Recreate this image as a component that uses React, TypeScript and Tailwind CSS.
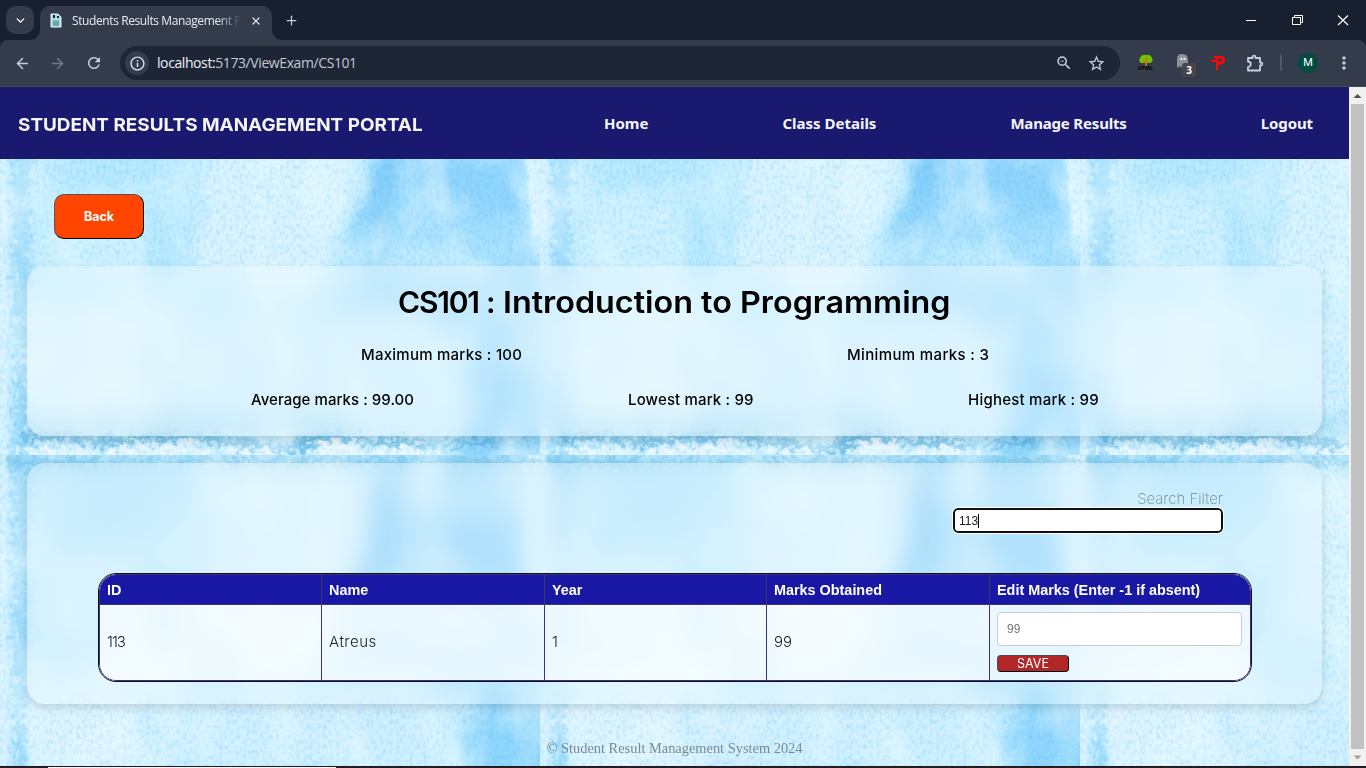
import React from "react";
import { ArrowLeft, ArrowRight, ChevronDown, Plus, X } from "lucide-react";
import { MdInfoOutline, MdMoreVert, MdRefresh, MdStarBorder, MdZoomOut } from "react-icons/md";

/* ---------- watercolour backdrop ---------- */

function Tile({ x, y }: { x: number; y: number }) {
  return (
    <svg x={x} y={y} width="540" height="360" viewBox="0 0 540 360" overflow="hidden">
      <rect width="540" height="360" fill="#c6efff" />
      <g filter="url(#soft)">
        <rect x="60" y="-10" width="130" height="190" fill="#b9eaff" />
        <ellipse cx="90" cy="140" rx="50" ry="45" fill="#cff2ff" />
        <path d="M210 -10H370L350 120L310 200L200 190Z" fill="#dbf5ff" />
        <ellipse cx="120" cy="270" rx="110" ry="55" fill="#e0f6ff" />
        <ellipse cx="270" cy="270" rx="140" ry="50" fill="#d3f2ff" />
        <path d="M396 -20H532V110L538 190L542 230H470L335 215L356 150L376 100L392 50Z" fill="#a4dffe" />
        <ellipse cx="455" cy="40" rx="45" ry="16" fill="#b2e5ff" />
        <ellipse cx="470" cy="90" rx="60" ry="24" fill="#90d5fd" />
        <ellipse cx="440" cy="165" rx="50" ry="24" fill="#bfecff" />
        <path d="M388 0L408 30L404 70L386 120L364 160L374 80Z" fill="#7fccf9" />
        <ellipse cx="400" cy="275" rx="50" ry="60" fill="#d0f1ff" />
        <path d="M496 190H556V380H456L470 270Z" fill="#91d7fd" />
        <ellipse cx="200" cy="330" rx="180" ry="10" fill="#aee1f8" />
        <path d="M-20 -10H560V14H-20Z" fill="#9fdaf5" opacity=".7" />
      </g>
      <path d="M523 -5H545V140H533L528 90Z" fill="#dcf5ff" filter="url(#edge)" />
      <g filter="url(#ragged)">
        <path d="M14 -10H34L36 60L28 110L32 200L24 260L30 370H12L16 240L12 120Z" fill="#7fcdf7" opacity=".5" />
        <path d="M0 4H540V11H420L400 15L385 9L300 12L180 8L60 13L0 13Z" fill="#6cbee6" opacity=".5" />
        <path d="M20 341L60 337L110 344L160 337L210 339L250 345L285 352L310 340L345 336L370 345L400 342L440 350L470 344L535 347V351H450L400 350L372 351L345 342L320 351L285 359L250 355L200 345L150 344L110 351L60 343L20 349Z" fill="#4aa8d8" opacity=".6" />
      </g>
      <g filter="url(#ragged)" fill="#effaff" opacity=".9">
        <ellipse cx="60" cy="362" rx="42" ry="11" />
        <ellipse cx="160" cy="362" rx="60" ry="13" />
        <ellipse cx="250" cy="364" rx="35" ry="9" />
        <ellipse cx="335" cy="358" rx="26" ry="14" />
        <ellipse cx="405" cy="362" rx="38" ry="11" />
      </g>
      <rect x="0" y="0" width="7" height="360" fill="#dff5ff" opacity=".85" filter="url(#edge)" />
      <rect width="540" height="360" filter="url(#grainDark)" />
      <rect width="540" height="360" filter="url(#grainLight)" />
    </svg>
  );
}

function Watercolour() {
  return (
    <svg className="absolute inset-0" width="1349" height="607" aria-hidden="true">
      <defs>
        <filter id="soft" x="-10%" y="-10%" width="120%" height="120%" colorInterpolationFilters="sRGB">
          <feGaussianBlur stdDeviation="9" result="b" />
          <feTurbulence type="fractalNoise" baseFrequency="0.03" numOctaves="4" seed="4" result="n" />
          <feDisplacementMap in="b" in2="n" scale="36" xChannelSelector="R" yChannelSelector="G" />
        </filter>
        <filter id="edge" x="-20%" y="-5%" width="140%" height="110%" colorInterpolationFilters="sRGB">
          <feGaussianBlur stdDeviation="1.2" result="b" />
          <feTurbulence type="fractalNoise" baseFrequency="0.09" numOctaves="3" seed="8" result="n" />
          <feDisplacementMap in="b" in2="n" scale="5" xChannelSelector="R" yChannelSelector="G" />
        </filter>
        <filter id="ragged" x="-5%" y="-20%" width="110%" height="140%" colorInterpolationFilters="sRGB">
          <feGaussianBlur stdDeviation="2.2" result="b" />
          <feTurbulence type="fractalNoise" baseFrequency="0.14" numOctaves="4" seed="2" result="n" />
          <feDisplacementMap in="b" in2="n" scale="26" xChannelSelector="R" yChannelSelector="G" />
        </filter>
        <filter id="grainDark" x="0" y="0" width="100%" height="100%" colorInterpolationFilters="sRGB">
          <feTurbulence type="fractalNoise" baseFrequency="0.3 0.2" numOctaves="4" seed="11" />
          <feColorMatrix values="0 0 0 0 .32  0 0 0 0 .72  0 0 0 0 .95  .55 0 0 0 -.22" />
        </filter>
        <filter id="grainLight" x="0" y="0" width="100%" height="100%" colorInterpolationFilters="sRGB">
          <feTurbulence type="fractalNoise" baseFrequency="0.02 0.012" numOctaves="6" seed="23" />
          <feColorMatrix values="0 0 0 0 .92  0 0 0 0 .985  0 0 0 0 1  1.5 0 0 0 -.67" />
        </filter>
      </defs>
      {[-64, 296].map((y) => [0, 540, 1080].map((x) => <Tile key={`${x}-${y}`} x={x} y={y} />))}
    </svg>
  );
}

/* ---------- browser chrome ---------- */

function TabStrip() {
  return (
    <div className="flex h-10 bg-[#18202f]">
      <div className="flex w-10 shrink-0 items-start pt-[6px] pl-[6px]">
        <div className="flex size-7 items-center justify-center rounded-[10px] bg-[#343c4c] text-white">
          <ChevronDown size={13} strokeWidth={2.6} />
        </div>
      </div>
      <div className="relative mt-[6px] flex h-[34px] w-[232px] items-center rounded-t-[10px] bg-[#343c4c] pr-[8px] pb-[5px] pl-[10px]">
        <svg className="absolute bottom-0 -left-[10px]" width="10" height="10"><path d="M10 0V10H0A10 10 0 0 0 10 0Z" fill="#343c4c" /></svg>
        <svg className="absolute -right-[10px] bottom-0" width="10" height="10"><path d="M0 0V10H10A10 10 0 0 1 0 0Z" fill="#343c4c" /></svg>
        <svg width="12" height="15" viewBox="0 0 12 15" className="shrink-0">
          <path d="M1 1H8L11 4V14H1Z" fill="#a9dbe0" stroke="#e4f4f4" />
          <path d="M3 2H5V5H3ZM7 3H9V5H7Z" fill="#1d2b38" />
          <path d="M3 7.5H9V13H3Z" fill="#6fa3ad" />
        </svg>
        <div className="ml-[10px] h-[18px] w-[168px] font-['Open_Sans'] text-[12px] leading-[18px] tracking-[-0.4px] whitespace-nowrap text-[#e8eaf0] [mask-image:linear-gradient(to_right,#000_145px,transparent_169px)]">
          Students Results Management P
        </div>
        <X size={12} strokeWidth={2.4} className="ml-[10px] shrink-0 text-[#e8eaf0]" />
      </div>
      <Plus size={15} strokeWidth={2} className="mt-[13px] ml-[12px] text-[#c7cddd]" />
      <div className="ml-auto flex h-10 items-center text-white">
        <svg width="138" height="40" fill="none" stroke="#fff" strokeWidth="1">
          <path d="M18 20.5H28" />
          <path d="M64.500 17.500H72.500V24.500H64.500ZM66.500 17.500V15.500H74.500V22.500H72.500" />
          <path d="M110 15.500L120 25M120 15.500L110 25" strokeWidth="1.200" />
        </svg>
      </div>
    </div>
  );
}

function Toolbar() {
  return (
    <div className="flex bg-[#18202f]">
      <div className="flex h-[47px] w-full items-center rounded-t-[8px] border-b border-[#484a4d] bg-[#343c4c] font-['Open_Sans'] text-[#c7cddd]">
        <ArrowLeft size={17} strokeWidth={2.1} className="ml-[14px]" />
        <ArrowRight size={17} strokeWidth={2.1} className="ml-[18px] text-[#737b8b]" />
        <MdRefresh size={18} className="ml-[19px]" />
        <div className="ml-[17px] flex h-[34px] w-[1000px] items-center rounded-full bg-[#1e2636] pl-[5px]">
          <div className="flex size-6 items-center justify-center rounded-full bg-[#343c4c]">
            <MdInfoOutline size={17} className="text-[#dfe2ea]" />
          </div>
          <div className="ml-[8px] text-[14px] leading-[20px] tracking-[-0.41px] text-[#c3c8d2]">
            <span className="text-[#eef0f5]">localhost:</span>5173/ViewExam/CS101
          </div>
          <MdZoomOut size={18} className="ml-auto" />
          <MdStarBorder size={19} className="mr-[14px] ml-[14px]" />
        </div>
        <div className="relative ml-[18px] h-[18px] w-4">
          <svg width="16" height="18" viewBox="0 0 16 18">
            <path d="M3 9Q0 7 2 4Q4 0 8 1Q12 0 14 4Q16 7 12 9Z" fill="#6ac800" />
            <path d="M8 3V13M8 9L11 6M8 9L5 7" stroke="#c47a12" strokeWidth="1.600" />
          </svg>
          <span className="absolute top-[12px] left-0 font-['Liberation_Sans'] text-[5.500px] leading-[5px] font-bold text-black">HTML</span>
        </div>
        <div className="relative ml-[21px] h-[22px] w-[22px]">
          <svg width="16" height="18" viewBox="0 0 16 18">
            <path d="M2 16V7Q2 2 7 2Q13 2 13 8V13L8 12L7 16L5 14Z" fill="#8e9197" />
            <circle cx="6.500" cy="7" r="1.100" fill="#fff" /><circle cx="9.500" cy="7" r="1.100" fill="#fff" />
          </svg>
          <span className="absolute top-[11px] left-[7px] flex h-[14px] w-[14px] items-center justify-center rounded-[3px] bg-[#44464a] text-[10px] font-bold text-white">3</span>
        </div>
        <svg className="ml-[13px]" width="16" height="17" viewBox="0 0 16 17">
          <path d="M3 1H11Q15 1 15 5Q15 10 8 10V14L6 16V7H11Q12 7 12 5.500Q12 4 10 4H5ZM0 5H9V7H2Z" fill="#f80808" />
        </svg>
        <svg className="ml-[20px]" width="18" height="19" viewBox="0 0 18 19" fill="none" stroke="#c7cddd" strokeWidth="1.800">
          <path d="M2 4H6.500V3.200A1.500 1.500 0 0 1 9.500 3.200V4H14V8.500H14.800A1.500 1.500 0 0 1 14.800 11.500H14V16.500H2V13A2.500 2.500 0 0 0 2 7.500Z" strokeLinejoin="round" />
        </svg>
        <div className="ml-[16px] h-4 w-[2px] bg-[#505869]" />
        <div className="ml-[16px] flex size-[20px] items-center justify-center rounded-full bg-[#004d40] font-[Roboto] text-[11px] text-white">M</div>
        <MdMoreVert size={20} className="ml-[16px]" />
      </div>
    </div>
  );
}

function Scrollbar() {
  return (
    <div className="flex w-[17px] flex-col items-center bg-[#f1f1f1]">
      <svg width="17" height="17"><path d="M4.500 11H12.500L8.500 7Z" fill="#505050" /></svg>
      <div className="h-[645px] w-[13px] bg-[#c1c1c1]" />
      <svg width="17" height="17"><path d="M4.500 6.500H12.500L8.500 10.500Z" fill="#a3a3a3" /></svg>
    </div>
  );
}

/* ---------- page ---------- */

function NavBar() {
  return (
    <header className="flex h-[72px] items-center bg-[#191970] pl-[18px] text-[#f5f5f5]">
      <div className="w-[586px] pt-[3px] font-[Inter] text-[18px] leading-[24px] font-bold whitespace-nowrap">
        <span className="inline-block origin-left scale-x-[1.05]">STUDENT RESULTS MANAGEMENT PORTAL</span>
      </div>
      <nav className="flex w-[709px] justify-between pb-px font-['Noto_Sans'] text-[15px] leading-[20px] font-bold whitespace-nowrap">
        <span>Home</span>
        <span>Class Details</span>
        <span className="tracking-[-0.18px]">Manage Results</span>
        <span className="tracking-[-0.1px]">Logout</span>
      </nav>
    </header>
  );
}

function Card({ className, children }: { className: string; children: React.ReactNode }) {
  return (
    <section className={`relative mx-[27px] w-[1295px] rounded-[18px] shadow-[0_4px_10px_rgba(0,0,0,0.13)] backdrop-blur-[10px] ${className}`}>
      {children}
    </section>
  );
}

function Summary() {
  return (
    <Card className="mt-[27px] h-[170px] bg-[#f8fcff]/38 font-[Inter] text-black">
      <h1 className="flex pt-[18px] pl-[371px] text-[30px] leading-[36px] font-semibold whitespace-nowrap">
        <span className="w-[88px] tracking-[-1.2px]">CS101</span>
        <span className="w-[17px]">:</span>
        <span className="origin-left scale-x-[1.077]">Introduction to Programming</span>
      </h1>
      <div className="mt-[25px] flex pl-[334px] text-[15px] leading-[20px] font-medium whitespace-nowrap">
        <p className="w-[486px] tracking-[0.25px]">Maximum marks : 100</p>
        <p className="tracking-[0.36px]">Minimum marks : 3</p>
      </div>
      <div className="mt-[25px] flex pl-[224px] text-[15px] leading-[20px] font-medium whitespace-nowrap">
        <p className="w-[377px] tracking-[0.05px]">Average marks : 99.00</p>
        <p className="w-[340px] tracking-[0.15px]">Lowest mark : 99</p>
        <p className="tracking-[0.23px]">Highest mark : 99</p>
      </div>
    </Card>
  );
}

function ResultsTable() {
  const columns = ["ID", "Name", "Year", "Marks Obtained", "Edit Marks (Enter -1 if absent)"];
  return (
    <div className="ml-[71px] h-[109px] w-[1154px] overflow-hidden rounded-[18px] border border-[#10101c]">
      <div className="h-[107px] overflow-hidden rounded-[17px] border border-[#3c3278]">
        <div className="grid h-[30px] grid-cols-[222px_223px_222px_223px_260px] border-b border-[#3f3569] bg-[#1818a5] font-['Liberation_Sans'] text-[14.4px] leading-[31px] font-bold text-white">
          {columns.map((c) => (
            <div key={c} className="h-[29px] border-r border-[#3f3569] pl-[7px] whitespace-nowrap last:border-r-0">{c}</div>
          ))}
        </div>
        <div className="grid h-[75px] grid-cols-[222px_223px_222px_223px_260px] bg-white/60 font-[Inter] text-[15px] leading-[74px] font-light text-[#202226]">
          <div className="border-r border-[#3c3278] pl-[7px] tracking-[-1px]">113</div>
          <div className="border-r border-[#3c3278] pl-[7px] tracking-[0.5px]">Atreus</div>
          <div className="border-r border-[#3c3278] pl-[7px]">1</div>
          <div className="border-r border-[#3c3278] pl-[7px]">99</div>
          <div className="flex flex-col items-start pt-[7px] pl-[7px]">
            <div className="h-[34px] w-[245px] rounded-[4px] border border-[#cccccc] bg-white pl-[9px] font-['Liberation_Sans'] text-[12px] leading-[32px] font-normal text-[#757575]">99</div>
            <button className="mt-[9px] h-[17px] w-[72px] rounded-[4px] border border-t-[#4a4a4a] border-r-black border-b-black border-l-[#4a4a4a] bg-[#b22828] text-center font-[Inter] text-[12.500px] leading-[15px] font-normal text-white">SAVE</button>
          </div>
        </div>
      </div>
    </div>
  );
}

function Results() {
  return (
    <Card className="mt-[27px] h-[241px] bg-[#f8fcff]/32">
      <div className="flex flex-col items-end pt-[27px] pr-[99px]">
        <label className="font-[Inter] text-[15px] leading-[18px] font-extralight text-[#78878f]">Search Filter</label>
        <div className="flex h-[25px] w-[270px] items-center rounded-[5px] border-2 border-[#101010] bg-white pl-[4px] font-['Liberation_Sans'] text-[12px] text-[#202020] outline outline-white">
          113<span className="h-[14px] w-px bg-black" />
        </div>
      </div>
      <div className="mt-[40px]"><ResultsTable /></div>
    </Card>
  );
}

export default function App() {
  return (
    <div className="flex h-[768px] w-[1366px] flex-col overflow-hidden bg-[#18202f]">
      <TabStrip />
      <Toolbar />
      <div className="flex h-[679px]">
        <div className="flex w-[1349px] flex-col">
          <NavBar />
          <main className="relative h-[607px] overflow-hidden">
            <Watercolour />
            <button className="relative mt-[35px] ml-[54px] block h-[45px] w-[90px] rounded-[10px] border border-t-[#555] border-r-black border-b-black border-l-[#555] bg-[#ff4500] pt-px font-[Inter] text-[12.500px] font-bold text-white">
              Back
            </button>
            <Summary />
            <Results />
            <footer className="relative mt-[35px] text-center font-['Liberation_Serif'] text-[14.4px] leading-[18px] text-[#7b8a92]">
              © Student Result Management System 2024
            </footer>
          </main>
        </div>
        <Scrollbar />
      </div>
      <div className="h-px bg-[#1e1a20]" />
      <div className="flex h-px bg-[#2a1d22] pl-12"><div className="w-72 bg-[#f5f5f5]" /></div>
    </div>
  );
}
